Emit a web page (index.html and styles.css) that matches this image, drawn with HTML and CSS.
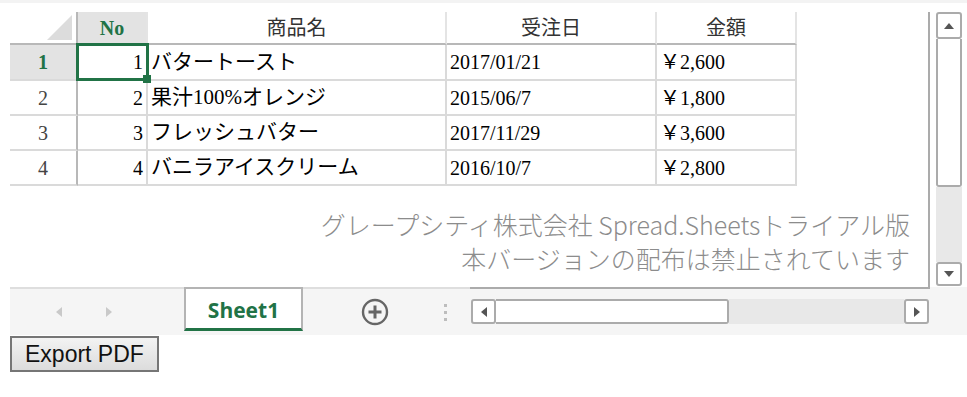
FILE: index.html
```html
<!DOCTYPE html>
<html lang="ja">
<head>
  <meta charset="UTF-8">
  <title>Spread.Sheets - Export PDF</title>
  <link rel="stylesheet" href="styles.css">
</head>
<body>
  <div class="topbar"></div>

  <div class="spread">
    <div class="main">
      <!-- シート表示領域 -->
      <div class="viewport">
        <div class="grid">
          <div class="corner"><span class="tri"></span></div>
          <div class="colhead sel">No</div>
          <div class="colhead">商品名</div>
          <div class="colhead">受注日</div>
          <div class="colhead">金額</div>

          <div class="rowhead sel">1</div>
          <div class="cell num active">1<span class="handle"></span></div>
          <div class="cell jp">バタートースト</div>
          <div class="cell">2017/01/21</div>
          <div class="cell">￥2,600</div>

          <div class="rowhead">2</div>
          <div class="cell num">2</div>
          <div class="cell jp">果汁100%オレンジ</div>
          <div class="cell">2015/06/7</div>
          <div class="cell">￥1,800</div>

          <div class="rowhead">3</div>
          <div class="cell num">3</div>
          <div class="cell jp">フレッシュバター</div>
          <div class="cell">2017/11/29</div>
          <div class="cell">￥3,600</div>

          <div class="rowhead">4</div>
          <div class="cell num">4</div>
          <div class="cell jp">バニラアイスクリーム</div>
          <div class="cell">2016/10/7</div>
          <div class="cell">￥2,800</div>
        </div>

        <div class="watermark">グレープシティ株式会社 Spread.Sheetsトライアル版<br>本バージョンの配布は禁止されています</div>
      </div>

      <!-- 縦スクロールバー -->
      <div class="vscroll">
        <div class="sbtn up"><svg width="10" height="6" viewBox="0 0 10 6"><path d="M0 6 L5 0 L10 6Z" fill="#555"/></svg></div>
        <div class="vthumb"></div>
        <div class="track"></div>
        <div class="sbtn down"><svg width="10" height="6" viewBox="0 0 10 6"><path d="M0 0 L5 6 L10 0Z" fill="#555"/></svg></div>
      </div>
    </div>

    <!-- シートタブと横スクロールバー -->
    <div class="strip">
      <div class="tabs">
        <div class="nav">
          <svg width="6" height="10" viewBox="0 0 6 10"><path d="M6 0 L0 5 L6 10Z" fill="#c9c9c9"/></svg>
          <svg width="6" height="10" viewBox="0 0 6 10"><path d="M0 0 L6 5 L0 10Z" fill="#c9c9c9"/></svg>
        </div>
        <div class="tab">Sheet1</div>
        <div class="add">
          <svg width="28" height="28" viewBox="0 0 28 28">
            <circle cx="14" cy="14" r="12" fill="none" stroke="#666" stroke-width="2.4"/>
            <path d="M14 7.5 V20.5 M7.5 14 H20.5" stroke="#666" stroke-width="3"/>
          </svg>
        </div>
        <div class="dots"><i></i><i></i><i></i></div>
      </div>
      <div class="hbar-wrap">
        <div class="hscroll">
          <div class="sbtn left"><svg width="6" height="10" viewBox="0 0 6 10"><path d="M6 0 L0 5 L6 10Z" fill="#555"/></svg></div>
          <div class="hthumb"></div>
          <div class="track"></div>
          <div class="sbtn right"><svg width="6" height="10" viewBox="0 0 6 10"><path d="M0 0 L6 5 L0 10Z" fill="#555"/></svg></div>
        </div>
      </div>
    </div>
  </div>

  <button class="export">Export PDF</button>
</body>
</html>
```

FILE: styles.css
```css
/* ページ全体 */
html, body { margin: 0; padding: 0; background: #fff; }
body { font-family: "Liberation Serif", "Noto Sans CJK JP", serif; }
.topbar { height: 3px; background: #f3f3f3; }

/* スプレッドシート本体 */
.spread { margin: 9px 0 0 10px; }
.main { display: flex; height: 275px; }
.viewport { width: 918px; border-right: 2px solid #ababab; display: flex; flex-direction: column; }

/* セルのグリッド */
.grid { display: grid; grid-template-columns: 68px 70px 299px 210px 140px; grid-template-rows: 33px 36px 35px 35px 35px; font-size: 20px; color: #000; }
.grid > div { box-sizing: border-box; display: flex; align-items: center; line-height: 1; white-space: nowrap; border-right: 2px solid #dadada; border-bottom: 2px solid #dadada; padding: 0 3px; }
.corner { justify-content: flex-end; align-items: flex-end !important; padding: 0 4px 3px 0 !important; border-bottom-color: #b8b8b8 !important; border-right-color: #b8b8b8 !important; }
.tri { width: 25px; height: 25px; background: #dcdcdc; clip-path: polygon(100% 0, 100% 100%, 0 100%); }
.colhead { justify-content: center; color: #333; border-right-color: #e4e4e4 !important; border-bottom-color: #b8b8b8 !important; }
.rowhead { justify-content: center; color: #444; border-right-color: #b8b8b8 !important; }
.colhead.sel, .rowhead.sel { background: #e3e3e3; color: #217346; font-weight: bold; }
.num { justify-content: flex-end; }
.jp { font-size: 21px; }

/* アクティブセルの選択枠 */
.active { position: relative; }
.active::after { content: ""; position: absolute; left: -2px; top: -2px; right: -3px; bottom: -2px; border: 3px solid #217346; }
.handle { position: absolute; right: -5px; bottom: -4px; width: 8px; height: 8px; background: #217346; z-index: 1; }

/* 透かし */
.watermark { margin-top: auto; padding: 0 18px 12px 0; text-align: right; font-family: "Noto Sans CJK JP", sans-serif; font-weight: 300; font-size: 25px; line-height: 34px; color: #8c8c8c; white-space: nowrap; }

/* スクロールバー */
.sbtn { box-sizing: border-box; border: 2px solid #ababab; border-radius: 3px; background: #fff; display: flex; align-items: center; justify-content: center; }
.track { flex: 1; background: #e8e8e8; }
.vscroll { margin-left: 6px; width: 26px; height: 274px; display: flex; flex-direction: column; }
.vscroll .up { height: 27px; }
.vscroll .down { height: 24px; }
.vthumb { box-sizing: border-box; height: 148px; border: 2px solid #ababab; border-top: 0; border-radius: 0 0 3px 3px; background: #fff; }

.strip { display: flex; height: 48px; background: #f5f5f5; }
.tabs { width: 460px; box-sizing: border-box; border-top: 2px solid #dedede; display: flex; align-items: flex-start; }
.hbar-wrap { width: 460px; box-sizing: border-box; border-top: 2px solid #ababab; padding: 10px 0 0 1px; }
.hscroll { display: flex; width: 458px; height: 25px; }
.hscroll .sbtn { width: 25px; }
.hthumb { box-sizing: border-box; width: 233px; border: 2px solid #ababab; border-left: 0; border-radius: 0 3px 3px 0; background: #fff; }

/* シートタブ */
.nav { width: 174px; height: 46px; box-sizing: border-box; padding-left: 46px; display: flex; align-items: center; gap: 44px; }
.tab { box-sizing: border-box; width: 119px; height: 44px; margin-top: -2px; padding-top: 3px; border: 2px solid #b4b4b4; border-bottom: 3px solid #217346; background: #fff; color: #217346; font: 700 21px "Open Sans", "Noto Sans", sans-serif; display: flex; align-items: center; justify-content: center; }
.add { box-sizing: border-box; width: 136px; height: 46px; padding-left: 58px; display: flex; align-items: center; }
.dots { margin: 15px 0 0 5px; display: flex; flex-direction: column; gap: 4px; }
.dots i { display: block; width: 3px; height: 3px; background: #bdbdbd; }

/* ボタン */
.export { display: block; margin: 1px 0 0 10px; height: 36px; padding: 0 13px; border: 2px solid #767676; border-radius: 0; background: linear-gradient(#f3f3f3, #dcdcdc); font: 23px "Liberation Sans", Arial, sans-serif; color: #111; }
```
